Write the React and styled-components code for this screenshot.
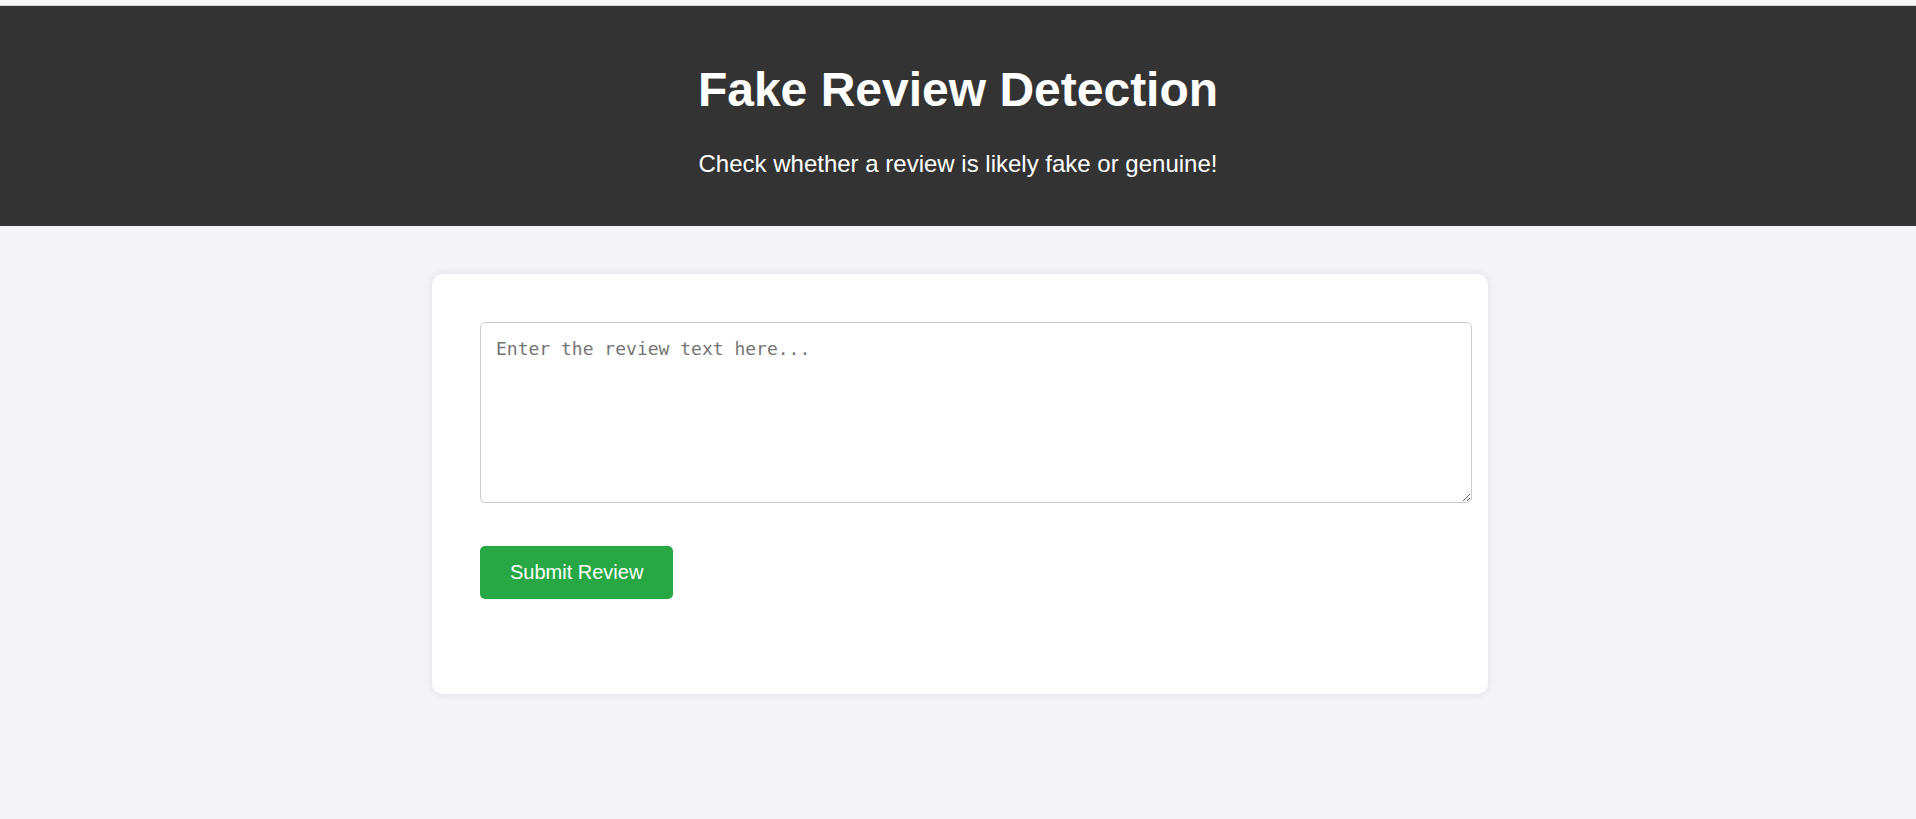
import React, { useState } from "react";
import styled, { createGlobalStyle } from "styled-components";

const GlobalStyle = createGlobalStyle`
  html, body {
    margin: 0;
    padding: 0;
  }
  body {
    font-family: "Liberation Sans", Arial, sans-serif;
    background: #f4f4f9;
    min-height: 819px;
  }
`;

const TopStrip = styled.div`
  height: 5px;
  background: #f7f7f7;
  border-bottom: 1px solid #d9d9d9;
`;

const Header = styled.header`
  background: #333333;
  color: #ffffff;
  text-align: center;
  padding: 56px 0 48px;
`;

const Title = styled.h1`
  margin: 0;
  font-size: 48px;
  font-weight: bold;
`;

const Subtitle = styled.p`
  margin: 33px 0 0;
  font-size: 24px;
`;

const Card = styled.main`
  width: 960px;
  margin: 48px auto 0;
  padding: 48px 48px 95px;
  background: #ffffff;
  border-radius: 10px;
  box-shadow: 0 0 10px rgba(0, 0, 0, 0.1);
  position: relative;
  left: 2px;
`;

const ReviewInput = styled.textarea`
  display: block;
  width: 960px;
  height: 149px;
  padding: 15px;
  margin: 0 0 43px;
  border: 1px solid #cccccc;
  border-radius: 5px;
  font-family: "DejaVu Sans Mono", "Liberation Mono", monospace;
  font-size: 18px;
  color: #222;
  background: #fff;

  &::placeholder {
    color: #757575;
  }
`;

const SubmitButton = styled.button`
  display: inline-block;
  padding: 15px 30px;
  border: none;
  border-radius: 5px;
  background: #28a745;
  color: #ffffff;
  font-family: "Liberation Sans", Arial, sans-serif;
  font-size: 20px;
  line-height: 23px;
  cursor: pointer;

  &:hover {
    background: #218838;
  }
`;

export default function App() {
  const [review, setReview] = useState("");

  return (
    <>
      <GlobalStyle />
      <TopStrip />
      <Header>
        <Title>Fake Review Detection</Title>
        <Subtitle>Check whether a review is likely fake or genuine!</Subtitle>
      </Header>
      <Card>
        <form onSubmit={(e) => e.preventDefault()}>
          <ReviewInput
            placeholder="Enter the review text here..."
            value={review}
            onChange={(e) => setReview(e.target.value)}
          />
          <SubmitButton type="submit">Submit Review</SubmitButton>
        </form>
      </Card>
    </>
  );
}
